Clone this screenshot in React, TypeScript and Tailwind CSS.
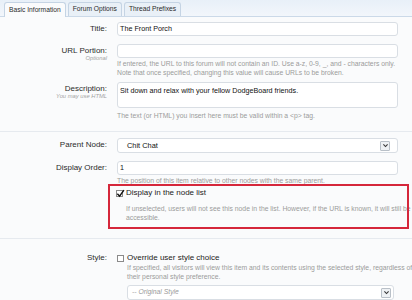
import type { ReactNode } from "react";

const FieldRow = ({
  label,
  hint,
  className = "",
  children,
}: {
  label: string;
  hint?: string;
  className?: string;
  children: ReactNode;
}) => (
  <div className={`flex ${className}`}>
    <div className="w-[107px] shrink-0 text-right">
      <div className="text-[8px] leading-[14px] text-[#2b2b2b]">{label}</div>
      {hint && (
        <div className="-mt-[3px] text-[5.8px] italic leading-[7px] text-[#a3a3a3]">
          {hint}
        </div>
      )}
    </div>
    <div className="ml-[10px] w-[281px]">{children}</div>
  </div>
);

const Help = ({ children, className = "" }: { children: ReactNode; className?: string }) => (
  <div className={`whitespace-nowrap text-[6.8px] leading-[9px] text-[#9b9b9b] ${className}`}>
    {children}
  </div>
);

const Checkbox = ({ checked }: { checked?: boolean }) => (
  <span className="relative inline-block h-[7px] w-[7px] shrink-0 border border-[#8a8a8a] bg-white">
    {checked && (
      <svg
        viewBox="0 0 10 10"
        className="absolute -left-[1px] -top-[2px] h-[9px] w-[9px]"
      >
        <path d="M1.5 5.2 L4 8 L8.8 1.2" fill="none" stroke="#111" strokeWidth="1.6" />
      </svg>
    )}
  </span>
);

const SelectArrow = () => (
  <span className="flex h-[10px] w-[10px] items-center justify-center rounded-[1px] border border-[#b9c0c8] bg-[#eef1f4]">
    <svg viewBox="0 0 10 10" className="h-[7px] w-[7px]">
      <path d="M2 3.5 L5 6.5 L8 3.5" fill="none" stroke="#333" strokeWidth="1.5" />
    </svg>
  </span>
);

const tabs = ["Basic Information", "Forum Options", "Thread Prefixes"];

export default function App() {
  return (
    <div className="h-[300px] w-[412px] overflow-hidden bg-[#fafbfc] font-['Liberation_Sans',Arial,sans-serif]">
      {/* tab strip */}
      <div className="flex h-[17px] items-end gap-[2px] border-b border-[#cbd9e8] bg-gradient-to-b from-[#e8f0f8] to-[#f2f6fb] pl-[4px]">
        {tabs.map((t, i) => (
          <div
            key={t}
            className={`flex h-[14px] items-center rounded-t-[3px] border border-b-0 border-[#c5d4e4] px-[4px] text-[6.7px] text-[#2b2b2b] ${
              i === 0 ? "-mb-px h-[15px] bg-[#fafbfc]" : "bg-[#e9f0f7]"
            }`}
          >
            {t}
          </div>
        ))}
      </div>

      <FieldRow label="Title:" className="mt-[5px]">
        <div className="flex h-[14px] items-center rounded-[3px] border border-[#d9dee4] bg-white px-[2px] text-[7.2px] text-[#111]">
          The Front Porch
        </div>
      </FieldRow>

      <FieldRow label="URL Portion:" hint="Optional" className="mt-[8px]">
        <div className="h-[14px] rounded-[3px] border border-[#d9dee4] bg-white" />
        <Help className="mt-[1px]">
          If entered, the URL to this forum will not contain an ID. Use a-z, 0-9, _, and - characters only.
          <br />
          Note that once specified, changing this value will cause URLs to be broken.
        </Help>
      </FieldRow>

      <FieldRow label="Description:" hint="You may use HTML" className="mt-[5px]">
        <div className="h-[26px] rounded-[3px] border border-[#d9dee4] bg-white px-[2px] pt-[3px] text-[7.2px] leading-[9px] text-[#111]">
          Sit down and relax with your fellow DodgeBoard friends.
        </div>
        <Help className="mt-[3px]">
          The text (or HTML) you insert here must be valid within a &lt;p&gt; tag.
        </Help>
      </FieldRow>

      <div className="mt-[11px] h-px bg-[#e6eaef]" />

      <FieldRow label="Parent Node:" className="mt-[6px]">
        <div className="flex h-[15px] items-center justify-between rounded-[3px] border border-[#d9dee4] bg-white pl-[9px] pr-[7px] text-[7.4px] text-[#111]">
          <span>Chit Chat</span>
          <SelectArrow />
        </div>
      </FieldRow>

      <FieldRow label="Display Order:" className="mt-[8px]">
        <div className="flex h-[14px] items-center rounded-[3px] border border-[#d9dee4] bg-white px-[2px] text-[7.2px] text-[#111]">
          1
        </div>
        <Help className="mt-[1px]">
          The position of this item relative to other nodes with the same parent.
        </Help>
      </FieldRow>

      <div className="flex">
        <div className="w-[107px] shrink-0" />
        <div className="relative ml-[9px] w-[290px]">
          <div className="pointer-events-none absolute -left-[8px] -top-[1px] h-[45px] w-[301px] border-2 border-[#d5273b]" />
          <div className="mt-[3px] flex items-center gap-[3px] text-[8px] leading-[10px] text-[#1a1a1a]">
            <Checkbox checked />
            <span>Display in the node list</span>
          </div>
          <Help className="ml-[10px] mt-[6px] leading-[8.5px]">
            If unselected, users will not see this node in the list. However, if the URL is known, it will still be
            <br />
            accessible.
          </Help>
        </div>
      </div>

      <div className="mt-[16px] h-px bg-[#e6eaef]" />

      <div className="flex pt-[14px]">
        <div className="w-[107px] shrink-0 text-right text-[8px] leading-[10px] text-[#2b2b2b]">
          Style:
        </div>
        <div className="ml-[10px] w-[290px]">
          <div className="flex items-center gap-[3px] text-[8px] leading-[10px] text-[#1a1a1a]">
            <Checkbox />
            <span>Override user style choice</span>
          </div>
          <Help className="ml-[10px] mt-[0px]">
            If specified, all visitors will view this item and its contents using the selected style, regardless of
            <br />
            their personal style preference.
          </Help>
          <div className="ml-[10px] mt-[4px] flex h-[15px] w-[267px] items-center justify-between rounded-[3px] border border-[#d9dee4] bg-white pl-[4px] pr-[2px] text-[6.8px] italic text-[#9a9a9a]">
            <span>-- Original Style</span>
            <SelectArrow />
          </div>
        </div>
      </div>
    </div>
  );
}
